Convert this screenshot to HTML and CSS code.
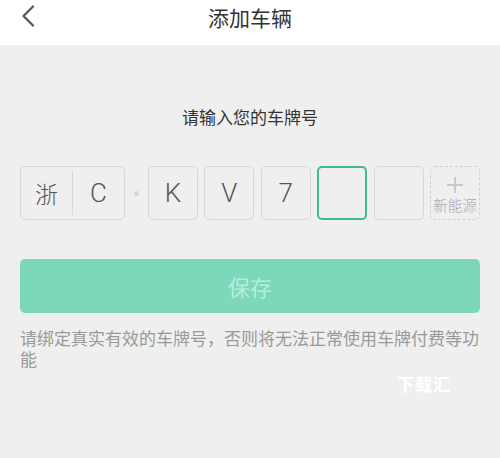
FILE: index.html
```html
<!DOCTYPE html>
<html>
<head>
<meta charset="utf-8">
	<title>添加车辆</title>
	<link rel="stylesheet" href="styles.css">
</head>
<body>

<div class="header">
	<span class="back">
		<svg width="16" height="22" viewBox="0 0 16 22"><path d="M13 1.5 L3.5 11 L13 20.5" fill="none" stroke="#555" stroke-width="2.2" stroke-linecap="round" stroke-linejoin="round"/></svg>
	</span>
	<div class="title">添加车辆</div>
</div>

<div class="main">
	<div class="tip">请输入您的车牌号</div>

	<div class="plate">
		<div class="box first">
			<span class="cell prov">浙</span>
			<span class="cell">C</span>
		</div>
		<span class="dot"></span>
		<div class="box">K</div>
		<div class="box">V</div>
		<div class="box">7</div>
		<div class="box active"></div>
		<div class="box"></div>
		<div class="box energy">
			<svg class="plus" width="16" height="16" viewBox="0 0 16 16"><path d="M8 0 V16 M0 8 H16" stroke="#c8c8cf" stroke-width="2"/></svg>
			<span class="label">新能源</span>
		</div>
	</div>

	<div class="save">保存</div>

	<p class="note">请绑定真实有效的车牌号，否则将无法正常使用车牌付费等功能</p>

	<div class="mark">下载汇</div>
</div>

</body>
</html>
```

FILE: styles.css
```css
body{
	margin: 0;
	width: 500px;
	height: 458px;
	overflow: hidden;
	background: #efefef;
	font-family: "Noto Sans CJK SC", "Noto Sans", sans-serif;
	color: #333;
}
.header{
	height: 45px;
	background: #fff;
	position: relative;
}
.header .back{
	position: absolute;
	left: 20px;
	top: 5px;
}
.header .title{
	line-height: 34px;
	text-align: center;
	font-size: 21px;
	color: #333;
}

.main{
	padding: 0 20px;
}
.tip{
	margin-top: 61px;
	line-height: 22px;
	text-align: center;
	font-size: 17px;
	color: #333;
}

.plate{
	display: flex;
	align-items: center;
	margin-top: 38px;
	height: 54px;
}
.plate .box{
	box-sizing: border-box;
	width: 50px;
	height: 54px;
	margin-left: 6.5px;
	border: 1.5px solid #d8d8d8;
	border-radius: 5px;
	display: flex;
	align-items: center;
	justify-content: center;
	font-family: Roboto, "Noto Sans", sans-serif;
	font-weight: 300;
	font-size: 26px;
	color: #555;
}
.plate .box.first{
	width: 105px;
	margin-left: 0;
	padding: 4px 0;
	align-items: stretch;
}
.plate .dot + .box{
	margin-left: 0;
}
.plate .cell{
	flex: 1;
	display: flex;
	align-items: center;
	justify-content: center;
}
.plate .cell.prov{
	border-right: 1.5px solid #d8d8d8;
	font-family: "Noto Sans CJK SC", sans-serif;
	font-size: 23px;
}
.plate .dot{
	width: 5px;
	height: 5px;
	border-radius: 50%;
	background: #d6d6d6;
	margin: 0 9px;
}
.plate .box.active{
	border: 2px solid #3dbd8b;
}
.plate .box.energy{
	border: 1.5px dashed #cfcfd6;
	flex-direction: column;
}
.energy .plus{
	display: block;
	margin-top: 4px;
}
.energy .label{
	margin-top: 4px;
	font-family: "Noto Sans CJK SC", sans-serif;
	font-size: 14.5px;
	line-height: 16px;
	white-space: nowrap;
	color: #a9a9b0;
}

.save{
	margin-top: 39px;
	height: 54px;
	line-height: 54px;
	border-radius: 5px;
	background: #7dd8bb;
	color: #b4eedb;
	text-align: center;
	font-size: 22px;
}

.note{
	margin: 14px 0 0;
	font-size: 17px;
	line-height: 21px;
	color: #999;
}

.mark{
	margin-top: 2px;
	padding-right: 29px;
	text-align: right;
	font-size: 17px;
	font-weight: bold;
	letter-spacing: 1px;
	color: #fff;
}
```
